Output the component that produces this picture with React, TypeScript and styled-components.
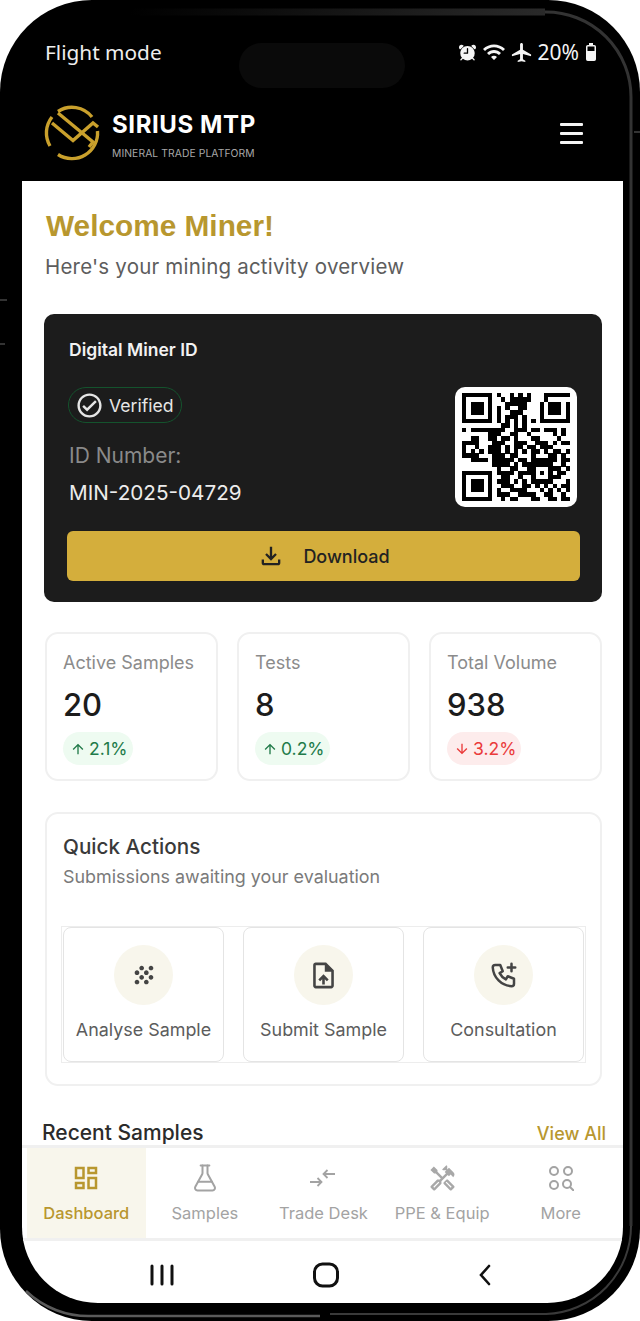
import styled, { createGlobalStyle } from "styled-components";
import type { ReactNode } from "react";
import { FlaskConical } from "lucide-react";
import { IoAlarm } from "react-icons/io5";
import {
  MdAirplanemodeActive,
  MdArrowDownward,
  MdArrowUpward,
  MdGrain,
  MdOutlineCheckCircle,
  MdOutlineDashboard,
  MdOutlineFileDownload,
  MdOutlineHandyman,
  MdOutlineUploadFile,
  MdWifi,
} from "react-icons/md";
import { TbPhonePlus } from "react-icons/tb";

const GOLD = "#b8972f";

const GlobalStyle = createGlobalStyle`
  html, body {
    margin: 0;
    padding: 0;
    background: #fff;
  }
  * {
    box-sizing: border-box;
  }
`;

const Phone = styled.div`
  position: relative;
  width: 640px;
  height: 1321px;
  padding: 0 17px 18px 22px;
  display: flex;
  flex-direction: column;
  overflow: hidden;
  background: #000;
  border-radius: 92px;
  font-family: Inter, "Liberation Sans", sans-serif;
`;

const Bezel = styled.svg`
  position: absolute;
  inset: 0;
  pointer-events: none;
`;

const Island = styled.div`
  position: absolute;
  top: 43px;
  left: 239px;
  width: 166px;
  height: 45px;
  border-radius: 23px;
  background: #0a0a0a;
`;

const StatusBar = styled.div`
  height: 92px;
  padding: 39px 27px 0 23px;
  display: flex;
  align-items: flex-start;
  justify-content: space-between;
  color: #eee;
`;

const StatusText = styled.span`
  font-family: "Noto Sans", sans-serif;
  font-size: 20.8px;
  line-height: 26px;
`;

const StatusIcons = styled.div`
  display: flex;
  align-items: center;
  height: 26px;
  gap: 4px;
  color: #f4f4f4;
`;

const Percent = styled(StatusText)`
  margin: 0 3px 0 1px;
  font-size: 21px;
`;

const Header = styled.header`
  height: 89px;
  padding: 13px 40px 0 22px;
  display: flex;
  align-items: flex-start;
  justify-content: space-between;
`;

const Brand = styled.div`
  display: flex;
  gap: 12px;
`;

const BrandText = styled.div`
  display: flex;
  flex-direction: column;
  padding-top: 6px;
`;

const BrandName = styled.span`
  color: #fff;
  font-size: 24px;
  font-weight: 700;
  line-height: 28px;
  letter-spacing: 0.6px;
`;

const BrandTag = styled.span`
  margin-top: 8px;
  color: #a8a8a8;
  font-size: 10.3px;
  line-height: 13px;
  letter-spacing: 0.1px;
`;

const Burger = styled.div`
  margin-top: 18px;
  width: 23px;
  display: flex;
  flex-direction: column;
  gap: 6px;
`;

const BurgerLine = styled.span`
  height: 3px;
  border-radius: 1px;
  background: #f5f5f5;
`;

const Screen = styled.div`
  flex: 1;
  min-height: 0;
  display: flex;
  flex-direction: column;
  overflow: hidden;
  background: #fff;
  border-radius: 0 0 76px 76px;
`;

const Main = styled.main`
  height: 964px;
  padding: 29px 21px 0 22px;
  overflow: hidden;
`;

const Welcome = styled.h1`
  margin: 0 0 0 2px;
  color: ${GOLD};
  font-family: "Liberation Sans", Arial, sans-serif;
  font-size: 29.8px;
  font-weight: 700;
  line-height: 32px;
`;

const Subtitle = styled.p`
  margin: 13px 0 0 1px;
  color: #5d5d5d;
  font-size: 20.5px;
  line-height: 24px;
  letter-spacing: 0.2px;
`;

const IdCard = styled.section`
  height: 288px;
  margin-top: 35px;
  padding: 26px 22px 21px 23px;
  display: flex;
  flex-direction: column;
  background: #1c1c1c;
  border-radius: 10px;
  color: #fff;
`;

const IdTitle = styled.div`
  margin-left: 2px;
  font-size: 17.5px;
  font-weight: 600;
  line-height: 20px;
  color: #f2f2f2;
`;

const IdBody = styled.div`
  display: flex;
  justify-content: space-between;
  align-items: flex-start;
  margin-top: 27px;
  padding-right: 3px;
  flex: 1;
`;

const IdInfo = styled.div`
  display: flex;
  flex-direction: column;
  align-items: flex-start;
`;

const VerifiedPill = styled.div`
  margin-left: 1px;
  height: 36px;
  width: 114px;
  padding-left: 6px;
  display: flex;
  align-items: center;
  gap: 5px;
  border: 1px solid #14532d;
  border-radius: 18px;
  color: #e6e6e6;
  font-size: 17.6px;
`;

const IdLabel = styled.div`
  margin: 20px 0 0 2px;
  color: #8a8a8a;
  font-size: 21px;
  line-height: 26px;
`;

const IdNumber = styled.div`
  margin: 11px 0 0 2px;
  color: #ececec;
  font-size: 20.7px;
  line-height: 26px;
`;

const QrFrame = styled.div`
  width: 122px;
  height: 120px;
  padding: 5px 0 0 7px;
  background: #fff;
  border-radius: 10px;
`;

const DownloadButton = styled.button`
  height: 50px;
  width: 513px;
  display: flex;
  align-items: center;
  justify-content: center;
  gap: 18px;
  border: 0;
  border-radius: 6px;
  background: #d4ae3c;
  color: #222;
  font-family: inherit;
  font-size: 18px;
  font-weight: 500;
`;

const StatRow = styled.div`
  margin: 30px 0 0 1px;
  display: grid;
  grid-template-columns: repeat(3, 173px);
  gap: 19px;
`;

const StatCard = styled.div`
  height: 149px;
  padding: 18px 0 0 16px;
  border: 2px solid #f0f0f0;
  border-radius: 13px;
`;

const StatLabel = styled.div`
  color: #8b8b8b;
  font-size: 18px;
  line-height: 22px;
`;

const StatValue = styled.div`
  margin-top: 13px;
  color: #1c1c1c;
  font-size: 31px;
  font-weight: 500;
  line-height: 36px;
`;

const Trend = styled.div<{ $down?: boolean }>`
  margin-top: 9px;
  height: 33px;
  width: fit-content;
  padding: 0 5px 0 7px;
  display: flex;
  align-items: center;
  gap: 3px;
  border-radius: 17px;
  background: ${(p) => (p.$down ? "#fdecec" : "#eefbf1")};
  color: ${(p) => (p.$down ? "#ea3a3a" : "#217a49")};
  font-size: 17.5px;
`;

const ActionsCard = styled.section`
  height: 274px;
  margin: 31px 0 0 1px;
  padding: 20px 15px 0 15px;
  border: 2px solid #f0f0f0;
  border-radius: 13px;
`;

const ActionsTitle = styled.h2`
  margin: 0 0 0 1px;
  color: #3a3a3a;
  font-size: 20.7px;
  font-weight: 500;
  line-height: 26px;
`;

const ActionsSub = styled.p`
  margin: 6px 0 0 1px;
  color: #7a7a7a;
  font-size: 17.9px;
  line-height: 22px;
`;

const ActionGrid = styled.div`
  width: 523px;
  height: 135px;
  margin-top: 39px;
  padding: 0 1px;
  display: grid;
  grid-template-columns: repeat(3, 161px);
  gap: 19px;
  outline: 1px solid #ededed;
`;

const ActionTile = styled.div`
  padding-top: 17px;
  display: flex;
  flex-direction: column;
  align-items: center;
  border: 1px solid #e4e4e4;
  border-radius: 8px;
  color: #5c5c5c;
  font-size: 17.9px;
`;

const ActionIcon = styled.div`
  width: 59px;
  height: 60px;
  margin-bottom: 14px;
  display: flex;
  align-items: center;
  justify-content: center;
  border-radius: 50%;
  background: #f8f6ec;
  color: #444;
`;

const RecentRow = styled.div`
  margin: 34px -4px 0 -2px;
  display: flex;
  align-items: baseline;
  justify-content: space-between;
`;

const RecentTitle = styled.h2`
  margin: 0;
  color: #2b2b2b;
  font-size: 21px;
  font-weight: 500;
  line-height: 26px;
`;

const ViewAll = styled.span`
  color: ${GOLD};
  font-size: 18px;
  font-weight: 500;
`;

const BottomNav = styled.nav`
  height: 96px;
  padding: 0 3px 0 5px;
  display: grid;
  grid-template-columns: repeat(5, 1fr);
  flex-shrink: 0;
  border-top: 3px solid #f0f0f0;
  border-bottom: 3px solid #f0f0f0;
`;

const NavItem = styled.div<{ $active?: boolean }>`
  padding-top: 14px;
  display: flex;
  flex-direction: column;
  align-items: center;
  gap: 9px;
  background: ${(p) => (p.$active ? "#f8f6ec" : "transparent")};
  color: ${(p) => (p.$active ? GOLD : "#a3a3a3")};
  font-size: 16.5px;
  line-height: 20px;
  font-weight: ${(p) => (p.$active ? 500 : 400)};
  white-space: nowrap;
`;

const NavIcon = styled.div`
  height: 32px;
  display: flex;
  align-items: center;
  justify-content: center;
`;

const SystemNav = styled.div`
  flex: 1;
  padding: 6px 131px 0 128px;
  display: flex;
  align-items: center;
  justify-content: space-between;
`;

const QR_ROWS = [
  "1111111010010101000111111",
  "1000001001011111000100000",
  "1011101000111110001011101",
  "1011101010100110001011101",
  "1011101010011100001011101",
  "1000001010111010001000001",
  "1111111010101010101111111",
  "0000000001101010000000000",
  "1011111111001110110111010",
  "0000001110011001000001010",
  "0011001101101000110000100",
  "1111000111001110011101011",
  "1001001110101101101110000",
  "1010101110101010110101101",
  "1111000111011000100011010",
  "0011110111110110111111011",
  "0000000111101011111110010",
  "0000000010011001100011101",
  "1111111011110111101010110",
  "1000001001100100100011100",
  "1011101011101010111110001",
  "1011101001110011010101011",
  "1011101010011110001010101",
  "1000001011100111100110010",
  "1111111001011000110011011",
];

function QrCode() {
  return (
    <svg width="108" height="110" viewBox="0 0 25 25" shapeRendering="crispEdges">
      {QR_ROWS.map((row, y) =>
        row
          .split("")
          .map((cell, x) =>
            cell === "1" ? <rect key={`${x}-${y}`} x={x} y={y} width="1.02" height="1.02" fill="#000" /> : null,
          ),
      )}
    </svg>
  );
}

function Logo() {
  return (
    <svg width="56" height="56" viewBox="0 0 56 56" fill="none" stroke="#c9a02c" strokeWidth="3.4">
      <path d="M14 6.5A25.6 25.6 0 0 1 48 12" />
      <path d="M8 12A25.6 25.6 0 0 0 6 41" />
      <path d="M14 49.5A25.6 25.6 0 0 0 53.5 26" />
      <path d="M14 8L49 37L45 42" />
      <path d="M8 18L29 35.5L49 18L54 22" />
    </svg>
  );
}

function BatteryIcon() {
  return (
    <svg width="10" height="18" viewBox="0 0 10 18">
      <rect x="3" y="0" width="4" height="2" fill="#f4f4f4" />
      <rect x="0.75" y="2.75" width="8.5" height="14.5" rx="1" fill="none" stroke="#f4f4f4" strokeWidth="1.5" />
      <rect x="1" y="8" width="8" height="9" fill="#f4f4f4" />
    </svg>
  );
}

function TradeIcon() {
  return (
    <svg width="28" height="24" viewBox="0 0 28 24" fill="none" stroke="#a3a3a3" strokeWidth="1.8">
      <path d="M1 16H12M8.5 12L12.5 16L8.5 20" />
      <path d="M26 8H15M18.5 4L14.5 8L18.5 12" />
    </svg>
  );
}

function MoreIcon() {
  return (
    <svg width="26" height="26" viewBox="0 0 26 26" fill="none" stroke="#a3a3a3" strokeWidth="2">
      <circle cx="6" cy="6" r="4" />
      <circle cx="20" cy="6" r="4" />
      <circle cx="6" cy="20" r="4" />
      <circle cx="19" cy="19" r="4" />
      <path d="M22 22L26 26" />
    </svg>
  );
}

function HomeKeys({ kind }: { kind: "recents" | "home" | "back" }) {
  if (kind === "recents") {
    return (
      <svg width="24" height="22" viewBox="0 0 24 22" stroke="#111" strokeWidth="3" strokeLinecap="round">
        <path d="M2 2V20M12 2V20M22 2V20" />
      </svg>
    );
  }
  if (kind === "home") {
    return (
      <svg width="26" height="26" viewBox="0 0 26 26" fill="none" stroke="#111" strokeWidth="3">
        <rect x="1.5" y="2" width="23" height="22" rx="8" />
      </svg>
    );
  }
  return (
    <svg width="14" height="22" viewBox="0 0 14 22" fill="none" stroke="#111" strokeWidth="2.6" strokeLinecap="round">
      <path d="M11 2L3 11L11 20" />
    </svg>
  );
}

const stats = [
  { label: "Active Samples", value: "20", trend: "2.1%" },
  { label: "Tests", value: "8", trend: "0.2%" },
  { label: "Total Volume", value: "938", trend: "3.2%", down: true },
];

const actions: { label: string; icon: ReactNode }[] = [
  { label: "Analyse Sample", icon: <MdGrain size={28} /> },
  { label: "Submit Sample", icon: <MdOutlineUploadFile size={31} /> },
  { label: "Consultation", icon: <TbPhonePlus size={30} /> },
];

const navItems: { label: string; icon: ReactNode; active?: boolean }[] = [
  { label: "Dashboard", icon: <MdOutlineDashboard size={30} />, active: true },
  { label: "Samples", icon: <FlaskConical size={30} strokeWidth={1.6} /> },
  { label: "Trade Desk", icon: <TradeIcon /> },
  { label: "PPE & Equip", icon: <MdOutlineHandyman size={29} color="#a8a8a8" /> },
  { label: "More", icon: <MoreIcon /> },
];

export default function App() {
  return (
    <>
      <GlobalStyle />
      <Phone>
        <StatusBar>
          <StatusText>Flight mode</StatusText>
          <StatusIcons>
            <IoAlarm size={21} />
            <MdWifi size={24} />
            <MdAirplanemodeActive size={23} />
            <Percent>20%</Percent>
            <BatteryIcon />
          </StatusIcons>
        </StatusBar>
        <Header>
          <Brand>
            <Logo />
            <BrandText>
              <BrandName>SIRIUS MTP</BrandName>
              <BrandTag>MINERAL TRADE PLATFORM</BrandTag>
            </BrandText>
          </Brand>
          <Burger>
            <BurgerLine />
            <BurgerLine />
            <BurgerLine />
          </Burger>
        </Header>
        <Screen>
          <Main>
            <Welcome>Welcome Miner!</Welcome>
            <Subtitle>Here's your mining activity overview</Subtitle>
            <IdCard>
              <IdTitle>Digital Miner ID</IdTitle>
              <IdBody>
                <IdInfo>
                  <VerifiedPill>
                    <MdOutlineCheckCircle size={29} />
                    Verified
                  </VerifiedPill>
                  <IdLabel>ID Number:</IdLabel>
                  <IdNumber>MIN-2025-04729</IdNumber>
                </IdInfo>
                <QrFrame>
                  <QrCode />
                </QrFrame>
              </IdBody>
              <DownloadButton>
                <MdOutlineFileDownload size={28} />
                Download
              </DownloadButton>
            </IdCard>
            <StatRow>
              {stats.map((stat) => (
                <StatCard key={stat.label}>
                  <StatLabel>{stat.label}</StatLabel>
                  <StatValue>{stat.value}</StatValue>
                  <Trend $down={stat.down}>
                    {stat.down ? <MdArrowDownward size={16} /> : <MdArrowUpward size={16} />}
                    {stat.trend}
                  </Trend>
                </StatCard>
              ))}
            </StatRow>
            <ActionsCard>
              <ActionsTitle>Quick Actions</ActionsTitle>
              <ActionsSub>Submissions awaiting your evaluation</ActionsSub>
              <ActionGrid>
                {actions.map((action) => (
                  <ActionTile key={action.label}>
                    <ActionIcon>{action.icon}</ActionIcon>
                    {action.label}
                  </ActionTile>
                ))}
              </ActionGrid>
            </ActionsCard>
            <RecentRow>
              <RecentTitle>Recent Samples</RecentTitle>
              <ViewAll>View All</ViewAll>
            </RecentRow>
          </Main>
          <BottomNav>
            {navItems.map((item) => (
              <NavItem key={item.label} $active={item.active}>
                <NavIcon>{item.icon}</NavIcon>
                {item.label}
              </NavItem>
            ))}
          </BottomNav>
          <SystemNav>
            <HomeKeys kind="recents" />
            <HomeKeys kind="home" />
            <HomeKeys kind="back" />
          </SystemNav>
        </Screen>
        <Island />
        <Bezel width="640" height="1321" viewBox="0 0 640 1321" fill="none">
          <defs>
            <linearGradient id="topBand" x1="130" y1="0" x2="545" y2="0" gradientUnits="userSpaceOnUse">
              <stop offset="0" stopColor="#000" />
              <stop offset="1" stopColor="#2a2a2a" />
            </linearGradient>
          </defs>
          <path d="M130 12H545" stroke="url(#topBand)" strokeWidth="7" />
          <path d="M545 12A85 85 0 0 1 631 98V1226" stroke="#333" strokeWidth="3" />
          <path d="M631 1226A88 88 0 0 1 546 1314H330" stroke="#3a3a3a" strokeWidth="2" />
          <path d="M26 1291A90 90 0 0 0 92 1316H320" stroke="#5a5a5a" strokeWidth="2.5" />
          <path d="M0 300H7M0 344H5M634 132H640" stroke="#333" strokeWidth="2" />
        </Bezel>
      </Phone>
    </>
  );
}
